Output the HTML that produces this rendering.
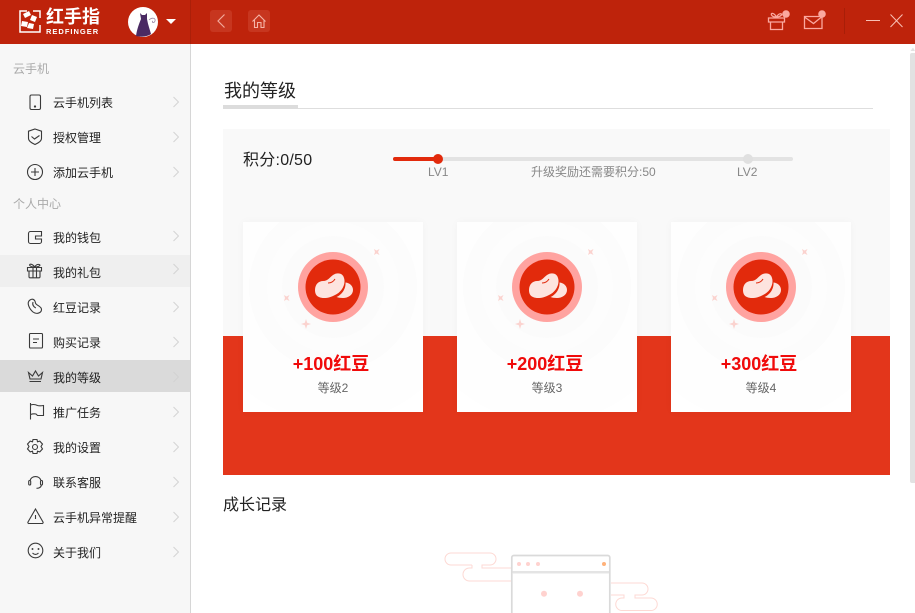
<!DOCTYPE html>
<html><head><meta charset="utf-8"><style>
*{margin:0;padding:0;box-sizing:border-box}
html,body{width:915px;height:613px;overflow:hidden;background:#fff;font-family:"Liberation Sans","Noto Sans CJK SC",sans-serif;color:#222}
.a{position:absolute}
.t{position:absolute;white-space:nowrap;line-height:1}
svg{position:absolute;overflow:visible}
.i{fill:none;stroke:#3a3a3a;stroke-width:1.100}
.m{position:absolute;left:53px;font-size:12px;line-height:16px;color:#222;white-space:nowrap}
.c{fill:none;stroke:#d2d2d2;stroke-width:.9}
.card{position:absolute;top:222px;width:180px;height:190px;background:#fff;overflow:hidden;box-shadow:0 0 8px rgba(0,0,0,.03)}
.card .big{position:absolute;left:0;width:176px;top:131px;text-align:center;font-size:18px;line-height:22px;font-weight:bold;color:#f00a0a}
.card .sm{position:absolute;left:0;width:180px;top:158px;text-align:center;font-size:12px;line-height:16px;color:#666}
</style></head><body>
<div class="a" style="left:0;top:0;width:915px;height:44px;background:#be230b"></div>
<div class="a" style="left:190px;top:0;width:1px;height:44px;background:#ab1f09"></div>
<svg style="left:0;top:0" width="915" height="44">
<g fill="none" stroke="#fff" stroke-width="1.500">
<path d="M27 11H20V32H40V25"/><path d="M33 11H40V18"/>
</g>
<g fill="#fff"><path d="M23 14l6-3 2 4-6 3zM32 15l5 2-2 5-5-2zM22 21l6 1-1 5-6-1zM29 23l5 1-1 5-6-1z"/></g>
<circle cx="143" cy="22" r="15" fill="#fff"/>
<path d="M136 36c1-7 3-12 5-17l-1-6 2 2h3l2-2v6c1 6 3 11 4 15-4 3-11 3-15 2z" fill="#4a2a63"/>
<path d="M149 20c3-3 7-2 6 1s-4 1-2 0" fill="none" stroke="#9a86a6" stroke-width=".8"/>
<path d="M166 19h10l-5 5z" fill="#fff"/>
<rect x="210" y="10" width="22" height="22" rx="3" fill="#c7361f"/>
<path d="M224.500 14.500l-6.500 6.500 6.500 6.500" fill="none" stroke="#f2a99b" stroke-width="1.200"/>
<rect x="248" y="10" width="22" height="22" rx="3" fill="#c7361f"/>
<path d="M252.500 21.500L259 15l6.500 6.500M254.500 20v7.500h3v-5h3.500v5h3V20" fill="none" stroke="#f5b5a8" stroke-width="1.100"/>
<g fill="none" stroke="#fba89f" stroke-width="1.300">
<path d="M768.500 18h16v4h-16zM770.500 22v7.500h12V22"/>
<path d="M776.500 17c-3-5-6-4-5-2s3 2 5 2c2 0 4-1 5-2s-2-3-5 2z"/>
<path d="M804.500 16.500h17.500v12h-17.500zM804.500 17l9 6.500 8-6.500"/>
</g>
<circle cx="786" cy="14" r="3.800" fill="#fba89f"/><circle cx="822" cy="14" r="3.800" fill="#fba89f"/>
<rect x="844" y="8" width="1" height="26" fill="#a81e08"/>
<path d="M866 20.500h14M890.500 14.500l12 12.500M902.500 14.500l-12 12.500" fill="none" stroke="#f8c0b5" stroke-width="1"/>
</svg>
<div class="t" style="left:46px;top:8px;font-size:18px;font-weight:bold;color:#fff">红手指</div>
<div class="t" style="left:46px;top:28px;font-size:7.500px;font-weight:bold;color:#fff;letter-spacing:1px">REDFINGER</div>

<div class="a" style="left:0;top:44px;width:191px;height:569px;background:#f7f7f7;border-right:1px solid #d6d6d6"></div>
<div class="a" style="left:0;top:255px;width:190px;height:32px;background:#efefef"></div>
<div class="a" style="left:0;top:360px;width:190px;height:32px;background:#dadada"></div>
<div class="t" style="left:13px;top:63px;font-size:12px;color:#aaa">云手机</div>
<div class="t" style="left:13px;top:198px;font-size:12px;color:#aaa">个人中心</div>
<div class="m" style="top:95px">云手机列表</div>
<div class="m" style="top:130px">授权管理</div>
<div class="m" style="top:165px">添加云手机</div>
<div class="m" style="top:230px">我的钱包</div>
<div class="m" style="top:265px">我的礼包</div>
<div class="m" style="top:300px">红豆记录</div>
<div class="m" style="top:335px">购买记录</div>
<div class="m" style="top:370px">我的等级</div>
<div class="m" style="top:405px">推广任务</div>
<div class="m" style="top:440px">我的设置</div>
<div class="m" style="top:475px">联系客服</div>
<div class="m" style="top:510px">云手机异常提醒</div>
<div class="m" style="top:545px">关于我们</div>
<svg style="left:0;top:0" width="190" height="613">
<g class="i">
<rect x="30" y="95" width="10.500" height="14.500" rx="1.500"/><circle cx="35" cy="106.500" r=".6"/>
<path d="M35 129l6.500 2.200v7c0 3-3.500 4.800-6.500 6.300-3-1.500-6.500-3.300-6.500-6.300v-7zM31.500 136.500l3 2.500 5-3.500"/>
<circle cx="35" cy="172" r="7.500"/><path d="M31 172h8M35 168v8"/>
<path d="M41.500 231.500H30.500a2 2 0 0 0-2 2v8a2 2 0 0 0 2 2h9a2 2 0 0 0 2-2v-2.500H35.500v-3H41.500V231"/>
<path d="M27.500 267.500h14v3.500h-14zM29 271v5.800a1 1 0 0 0 1 1h9a1 1 0 0 0 1-1V271M33 267.500v10M36.500 267.500v10M34.800 267c-3-4-6-3-5-1.500s3 1.500 5 1.500c2 0 4-.5 5-1.500s-3-2.500-5 1.500z"/>
<path d="M30 300c3-2 5 0 5.500 3 .5 2.500 6 3 6 6.500 0 3.500-5 5.200-8.500 2.500-3.500-3-7-9.500-3-12z"/><path d="M33 302c-1 3 1 5 2.800 6"/>
<path d="M30.500 333.500h11a1 1 0 0 1 1 1v12.500a1 1 0 0 1-1 1h-11a1 1 0 0 1-1-1v-12.500a1 1 0 0 1 1-1zM33 339h6M33 342.500h4"/>
<path d="M28.500 372.500l4 3.500 3-5 3 5 4-3.500-1.500 6.500H30zM29.500 381.500h11.500"/>
<path d="M30.500 403v16.500M30.500 405c3-1 5-.5 7 .5 1.500.5 3 .5 6 0v10h-6l-1.500-1.500c-2-.5-4 0-5.500.5"/>
<path d="M33 439.500l4 0 .5 2.300 2.300-.7 2.700 3-1.500 2.400 1.500 2.400-2.700 3-2.300-.7-.5 2.300h-4l-.5-2.300-2.300.7-2.700-3 1.500-2.400-1.500-2.400 2.700-3 2.300.7z"/><circle cx="35" cy="447" r="2.500"/>
<path d="M30 480.500a5.800 5.800 0 0 1 11 0M41.500 485c-.5 2.300-2.500 3.300-5 3.300"/><rect x="28.700" y="480.500" width="2" height="4.500" rx="1"/><rect x="40.500" y="480.500" width="2" height="4.500" rx="1"/>
<path d="M35.500 509l7.500 13a1 1 0 0 1-1 1.500H29a1 1 0 0 1-1-1.500zM35.500 515v4"/>
<circle cx="35.500" cy="550.500" r="7.300"/><circle cx="32.500" cy="549" r=".4"/><circle cx="38.500" cy="549" r=".4"/><path d="M32.500 553c2 2 4 2 6 0"/>
</g>
<path class="c" d="M173.500 97l5 5-5 5M173.500 132l5 5-5 5M173.500 167l5 5-5 5M173.500 231l5 5-5 5M173.500 264l5 5-5 5M173.500 302l5 5-5 5M173.500 337l5 5-5 5M173.500 372l5 5-5 5M173.500 407l5 5-5 5M173.500 442l5 5-5 5M173.500 477l5 5-5 5M173.500 512l5 5-5 5M173.500 547l5 5-5 5"/>
</svg>

<div class="t" style="left:224px;top:82px;font-size:18px;color:#222">我的等级</div>
<div class="a" style="left:223px;top:105px;width:75px;height:4px;background:#dcdcdc"></div>
<div class="a" style="left:298px;top:108px;width:575px;height:1px;background:#dedede"></div>
<div class="a" style="left:223px;top:129px;width:667px;height:207px;background:#f9f9f9"></div>
<div class="a" style="left:223px;top:336px;width:667px;height:139px;background:#e3361b"></div>
<div class="t" style="left:243px;top:153px;font-size:16px;color:#222;letter-spacing:.25px">积分:0/50</div>
<div class="a" style="left:393px;top:157px;width:400px;height:4px;border-radius:2px;background:#e3e3e3"></div>
<div class="a" style="left:393px;top:157px;width:45px;height:4px;border-radius:2px;background:#e22a0c"></div>
<div class="a" style="left:433px;top:154px;width:10px;height:10px;border-radius:50%;background:#e22a0c"></div>
<div class="a" style="left:743px;top:154px;width:10px;height:10px;border-radius:50%;background:#e0e0e0"></div>
<div class="t" style="left:428px;top:166px;font-size:12px;color:#888">LV1</div>
<div class="t" style="left:531px;top:166px;font-size:12px;color:#888">升级奖励还需要积分:50</div>
<div class="t" style="left:737px;top:166px;font-size:12px;color:#888">LV2</div>

<div class="card" style="left:243px"><svg style="left:0;top:0" width="180" height="190"><circle cx="90" cy="65" r="135" fill="#fefefe"/><circle cx="90" cy="65" r="84" fill="#fcfcfc"/><circle cx="90" cy="65" r="66" fill="#fdfdfd"/><circle cx="90" cy="65" r="51" fill="#fbfbfb"/>
<circle cx="90" cy="65" r="35" fill="#ffa3a0"/><circle cx="90" cy="65" r="27.500" fill="#e22a0c"/>
<path d="M102.500 60.500C107 61 110 64 110 68 110 73 105 76 100 76 97 76 95 75.600 93.500 75 98.500 73 103 67 102.500 60.500z" fill="#fde4df"/>
<path d="M72 68C72 62 76 59 80 59 85 59 87 55 90 53 94 50 100 51 101 56 103 62 99 70 92 73 87 76 80 77 76 75 73 74 72 71 72 68z" fill="#fde4df"/>
<path d="M85 61c3 0 5.500-1.500 7-4" fill="none" stroke="#e22a0c" stroke-width="1"/>
<g fill="#fbd3cf"><path d="M131 27l2.500 1.500 3-1.500-1.500 3 1.500 3-3-1.500-2.500 1.500 1-3zM41 73l2.500 1.500 3-1.500-1.500 3 1.500 3-3-1.500-2.500 1.500 1-3zM63 97l1.200 3.800 3.800 1.200-3.800 1.200-1.200 3.800-1.200-3.800-3.800-1.200 3.800-1.200z"/></g></svg><div class="big">+100红豆</div><div class="sm">等级2</div></div>
<div class="card" style="left:457px"><svg style="left:0;top:0" width="180" height="190"><circle cx="90" cy="65" r="135" fill="#fefefe"/><circle cx="90" cy="65" r="84" fill="#fcfcfc"/><circle cx="90" cy="65" r="66" fill="#fdfdfd"/><circle cx="90" cy="65" r="51" fill="#fbfbfb"/>
<circle cx="90" cy="65" r="35" fill="#ffa3a0"/><circle cx="90" cy="65" r="27.500" fill="#e22a0c"/>
<path d="M102.500 60.500C107 61 110 64 110 68 110 73 105 76 100 76 97 76 95 75.600 93.500 75 98.500 73 103 67 102.500 60.500z" fill="#fde4df"/>
<path d="M72 68C72 62 76 59 80 59 85 59 87 55 90 53 94 50 100 51 101 56 103 62 99 70 92 73 87 76 80 77 76 75 73 74 72 71 72 68z" fill="#fde4df"/>
<path d="M85 61c3 0 5.500-1.500 7-4" fill="none" stroke="#e22a0c" stroke-width="1"/>
<g fill="#fbd3cf"><path d="M131 27l2.500 1.500 3-1.500-1.500 3 1.500 3-3-1.500-2.500 1.500 1-3zM41 73l2.500 1.500 3-1.500-1.500 3 1.500 3-3-1.500-2.500 1.500 1-3zM63 97l1.200 3.800 3.800 1.200-3.800 1.200-1.200 3.800-1.200-3.800-3.800-1.200 3.800-1.200z"/></g></svg><div class="big">+200红豆</div><div class="sm">等级3</div></div>
<div class="card" style="left:671px"><svg style="left:0;top:0" width="180" height="190"><circle cx="90" cy="65" r="135" fill="#fefefe"/><circle cx="90" cy="65" r="84" fill="#fcfcfc"/><circle cx="90" cy="65" r="66" fill="#fdfdfd"/><circle cx="90" cy="65" r="51" fill="#fbfbfb"/>
<circle cx="90" cy="65" r="35" fill="#ffa3a0"/><circle cx="90" cy="65" r="27.500" fill="#e22a0c"/>
<path d="M102.500 60.500C107 61 110 64 110 68 110 73 105 76 100 76 97 76 95 75.600 93.500 75 98.500 73 103 67 102.500 60.500z" fill="#fde4df"/>
<path d="M72 68C72 62 76 59 80 59 85 59 87 55 90 53 94 50 100 51 101 56 103 62 99 70 92 73 87 76 80 77 76 75 73 74 72 71 72 68z" fill="#fde4df"/>
<path d="M85 61c3 0 5.500-1.500 7-4" fill="none" stroke="#e22a0c" stroke-width="1"/>
<g fill="#fbd3cf"><path d="M131 27l2.500 1.500 3-1.500-1.500 3 1.500 3-3-1.500-2.500 1.500 1-3zM41 73l2.500 1.500 3-1.500-1.500 3 1.500 3-3-1.500-2.500 1.500 1-3zM63 97l1.200 3.800 3.800 1.200-3.800 1.200-1.200 3.800-1.200-3.800-3.800-1.200 3.800-1.200z"/></g></svg><div class="big">+300红豆</div><div class="sm">等级4</div></div>

<div class="t" style="left:223px;top:498px;font-size:16px;color:#222">成长记录</div>
<svg style="left:0;top:0" width="915" height="613">
<path d="M472 565H451a6 6 0 0 1 0-12H490a6 6 0 0 1 0 12H482v3H511M472 565v3H469.500a6.500 6.500 0 0 0 0 13H511" fill="none" stroke="#fdd9d4" stroke-width="1"/>
<path d="M611 583H642a6 6 0 0 1 0 12H635v3H651a6 6 0 0 1 0 12.500H622a6 6 0 0 1 0-12.500H624v-3H611" fill="none" stroke="#fdd9d4" stroke-width="1"/>
<path d="M511.800 613V557.500a2 2 0 0 1 2-2H607.800a2 2 0 0 1 2 2V613" fill="#fff" stroke="#dadada" stroke-width="1.700"/>
<rect x="512.500" y="571" width="96.500" height="2" fill="#e4e4e4"/>
<rect x="512.500" y="573" width="96.500" height="1" fill="#f2f2f2"/>
<g fill="#ffd2cf"><circle cx="519" cy="564" r="2"/><circle cx="528" cy="564" r="2"/><circle cx="538" cy="564" r="2"/><circle cx="544" cy="593.700" r="3"/><circle cx="580" cy="593.700" r="3"/></g>
<circle cx="604" cy="564" r="2" fill="#ffb27a"/>
</svg>
<div class="a" style="left:910px;top:53px;width:5px;height:430px;background:#e2e2e2;border-radius:2px 0 0 2px"></div>
<svg style="left:0;top:0" width="915" height="60"><path d="M910.500 51l2.500-3.500 2 3.500z" fill="#e2e2e2"/></svg>
</body></html>
